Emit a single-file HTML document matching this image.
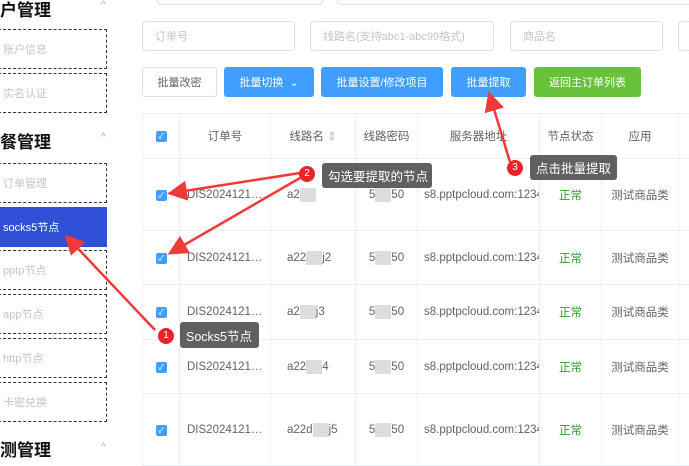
<!DOCTYPE html>
<html><head><meta charset="utf-8"><style>
*{box-sizing:border-box;margin:0;padding:0}
body{width:689px;height:460px;overflow:hidden;background:#fff;font-family:"Liberation Sans","Noto Sans CJK SC",sans-serif;position:relative;color:#606266}
.a{position:absolute}
.side{left:0;top:0;width:107px;height:460px;background:#fff}
.item{position:absolute;left:-2px;width:109px;border:1px dashed #333;font-size:11px;color:#c0c4cc;padding-left:4px;display:flex;align-items:center}
.grp{position:absolute;left:0;font-size:17px;font-weight:bold;color:#111}
.car{position:absolute;left:101px;font-size:10px;color:#aaa}
.inp{position:absolute;border:1px solid #dcdfe6;border-radius:4px;font-size:11px;color:#c0c4cc;padding-left:12px;display:flex;align-items:center}
.btn{position:absolute;top:67px;height:30px;border-radius:3px;font-size:11px;color:#fff;background:#409eff;display:flex;align-items:center;justify-content:center}
table{position:absolute;left:142px;top:113px;border-collapse:collapse;font-size:11.5px;table-layout:fixed;width:576px}
td{border:1px solid #ebeef5;text-align:center;white-space:nowrap;overflow:hidden}
.cb{display:inline-block;width:11px;height:11px;background:#409eff;border-radius:2px;color:#fff;font-size:8px;line-height:11px}
.g{color:#2a9d2a}
.tip{position:absolute;background:#606060;color:#fff;font-size:12.5px;border-radius:3px;display:flex;align-items:center;padding-left:6px}
.badge{position:absolute;width:16px;height:16px;border-radius:50%;background:#e8242a;color:#fff;font-size:10px;text-align:center;line-height:16px}
.blur{display:inline-block;width:16px;height:14px;background:#ddd;vertical-align:middle}
</style></head><body>
<div class="a side">
<div class="grp" style="top:-4px">户管理</div><div class="car" style="top:0">^</div>
<div class="item" style="top:29px;height:40px">账户信息</div>
<div class="item" style="top:73px;height:40px">实名认证</div>
<div class="grp" style="top:128px">餐管理</div><div class="car" style="top:132px">^</div>
<div class="item" style="top:163px;height:40px">订单管理</div>
<div class="item" style="top:207px;height:40px;background:#2f4fd6;color:#fff;border-color:#2f4fd6">socks5节点</div>
<div class="item" style="top:250px;height:40px">pptp节点</div>
<div class="item" style="top:294px;height:40px">app节点</div>
<div class="item" style="top:338px;height:40px">http节点</div>
<div class="item" style="top:382px;height:40px">卡密兑换</div>
<div class="grp" style="top:436px">测管理</div><div class="car" style="top:442px">^</div>
</div>
<div class="inp" style="left:157px;top:-25px;width:166px;height:30px"></div>
<div class="inp" style="left:337px;top:-25px;width:400px;height:30px"></div>
<div class="inp" style="left:142px;top:21px;width:153px;height:30px">订单号</div>
<div class="inp" style="left:310px;top:21px;width:184px;height:30px">线路名(支持abc1-abc99格式)</div>
<div class="inp" style="left:510px;top:21px;width:153px;height:30px">商品名</div>
<div class="inp" style="left:678px;top:21px;width:60px;height:30px"></div>
<div class="btn" style="left:142px;width:75px;background:#fff;border:1px solid #dcdfe6;color:#606266">批量改密</div>
<div class="btn" style="left:224px;width:90px">批量切换 &nbsp;⌄</div>
<div class="btn" style="left:321px;width:122px">批量设置/修改项目</div>
<div class="btn" style="left:451px;width:75px">批量提取</div>
<div class="btn" style="left:534px;width:107px;background:#67c23a">返回主订单列表</div>
<table>
<colgroup><col style="width:37px"><col style="width:91px"><col style="width:85px"><col style="width:62px"><col style="width:122px"><col style="width:62px"><col style="width:77px"><col style="width:40px"></colgroup>
<tr style="height:45px;color:#606266"><td><span class="cb">✓</span></td><td>订单号</td><td>线路名 <span style="color:#bbb">⇕</span></td><td>线路密码</td><td>服务器地址</td><td>节点状态</td><td>应用</td><td></td></tr>
<tr style="height:72px"><td><span class="cb">✓</span></td><td style="text-align:left;padding-left:7px">DIS2024121…</td><td style="text-align:left;padding-left:16px">a2<span class="blur"></span></td><td>5<span class="blur"></span>50</td><td style="text-align:left;padding-left:6px">s8.pptpcloud.com:1234:</td><td class="g">正常</td><td>测试商品类</td><td></td></tr>
<tr style="height:54px"><td><span class="cb">✓</span></td><td style="text-align:left;padding-left:7px">DIS2024121…</td><td style="text-align:left;padding-left:16px">a22<span class="blur"></span>j2</td><td>5<span class="blur"></span>50</td><td style="text-align:left;padding-left:6px">s8.pptpcloud.com:1234:</td><td class="g">正常</td><td>测试商品类</td><td></td></tr>
<tr style="height:55px"><td><span class="cb">✓</span></td><td style="text-align:left;padding-left:7px">DIS2024121…</td><td style="text-align:left;padding-left:16px">a2<span class="blur"></span>j3</td><td>5<span class="blur"></span>50</td><td style="text-align:left;padding-left:6px">s8.pptpcloud.com:1234:</td><td class="g">正常</td><td>测试商品类</td><td></td></tr>
<tr style="height:54px"><td><span class="cb">✓</span></td><td style="text-align:left;padding-left:7px">DIS2024121…</td><td style="text-align:left;padding-left:16px">a22<span class="blur"></span>4</td><td>5<span class="blur"></span>50</td><td style="text-align:left;padding-left:6px">s8.pptpcloud.com:1234:</td><td class="g">正常</td><td>测试商品类</td><td></td></tr>
<tr style="height:72px"><td><span class="cb">✓</span></td><td style="text-align:left;padding-left:7px">DIS2024121…</td><td style="text-align:left;padding-left:16px">a22d<span class="blur"></span>j5</td><td>5<span class="blur"></span>50</td><td style="text-align:left;padding-left:6px">s8.pptpcloud.com:1234:</td><td class="g">正常</td><td>测试商品类</td><td></td></tr>
</table>
<svg class="a" style="left:0;top:0" width="689" height="460">
<defs><marker id="m" markerWidth="8" markerHeight="8" refX="6" refY="4" orient="auto"><path d="M0,0 L8,4 L0,8 z" fill="#f03a3a"/></marker></defs>
<g stroke="#f03a3a" stroke-width="2.5" fill="none" marker-end="url(#m)">
<line x1="300" y1="173" x2="172" y2="193"/>
<line x1="300" y1="178" x2="172" y2="252"/>
<line x1="510" y1="162" x2="490" y2="96"/>
<line x1="155" y1="330" x2="68" y2="238"/>
</g></svg>
<div class="tip" style="left:322px;top:163px;width:110px;height:25px">勾选要提取的节点</div>
<div class="badge" style="left:299px;top:166px">2</div>
<div class="tip" style="left:530px;top:155px;width:87px;height:25px">点击批量提取</div>
<div class="badge" style="left:507px;top:160px">3</div>
<div class="tip" style="left:180px;top:322px;width:79px;height:26px">Socks5节点</div>
<div class="badge" style="left:158px;top:328px">1</div>
</body></html>
